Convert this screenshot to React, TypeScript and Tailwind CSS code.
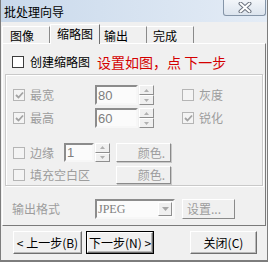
import React from "react";

const dim = "text-[#9d9d9d]";

function Check({ checked = false, disabled = false }: { checked?: boolean; disabled?: boolean }) {
  return (
    <div
      className={`w-[12px] h-[12px] shrink-0 border flex items-center justify-center ${
        disabled ? "border-[#b5b5b5] bg-[#f4f4f4]" : "border-[#3c3c3c] bg-white"
      }`}
    >
      {checked && (
        <svg width="9" height="9" viewBox="0 0 9 9">
          <path d="M1 4 L3.5 6.5 L8 1.5" fill="none" stroke={disabled ? "#a3a3a3" : "#222"} strokeWidth="1.8" />
        </svg>
      )}
    </div>
  );
}

function Spin({ h = 20 }: { h?: number }) {
  return (
    <div className={`flex flex-col w-[15px] ${h === 20 ? "h-[20px]" : "h-[19px]"}`}>
      {[0, 1].map((i) => (
        <div
          key={i}
          className="flex-1 bg-[#f0f0f0] border border-t-white border-l-white border-b-[#8f8f8f] border-r-[#8f8f8f] flex items-center justify-center"
        >
          <svg width="5" height="3" viewBox="0 0 5 3">
            <path d={i === 0 ? "M0 3 L2.5 0 L5 3 Z" : "M0 0 L2.5 3 L5 0 Z"} fill="#b0b0b0" />
          </svg>
        </div>
      ))}
    </div>
  );
}

function NumBox({ value, w }: { value: string; w: string }) {
  return (
    <div
      className={`${w} h-full bg-[#fbfbfb] border-2 border-t-[#8c8c8c] border-l-[#8c8c8c] border-b-[#f7f7f7] border-r-[#f7f7f7] flex items-center pl-[1px] font-['Liberation_Sans',sans-serif] text-[13px] text-[#7e7e7e]`}
    >
      {value}
    </div>
  );
}

function RaisedBtn({ children, w, h }: { children: React.ReactNode; w: string; h: string }) {
  return (
    <div
      className={`${w} ${h} bg-[#f0f0f0] border border-t-white border-l-white border-b-[#8a8a8a] border-r-[#8a8a8a] shadow-[1px_1px_0_#c8c8c8] flex items-center justify-end pr-[5px] ${dim}`}
    >
      {children}
    </div>
  );
}

function PushBtn({ children, def = false, w }: { children: React.ReactNode; def?: boolean; w: string }) {
  return (
    <div className={`${w} h-[23px] ${def ? "border border-black" : ""}`}>
      <div className="w-full h-full bg-[#f0f0f0] border border-t-white border-l-white border-b-[#6f6f6f] border-r-[#6f6f6f] shadow-[inset_-1px_-1px_0_#b8b8b8] flex items-center justify-center text-[12px] text-black whitespace-nowrap">
        {children}
      </div>
    </div>
  );
}

export default function App() {
  return (
    <div className="w-[268px] h-[262px] bg-[#f0f0f0] overflow-hidden font-['Noto_Sans_CJK_SC',sans-serif] text-[12px] leading-none text-black border-l border-r border-b-2 border-[#7d7d7d]">
      <div className="h-[22px] flex bg-gradient-to-r from-[#c9d9eb] to-[#e4ecf6]">
        <div className="pl-[3px] pt-[6px] text-[12px] text-black">批处理向导</div>
        <div className="ml-auto mr-[1px] w-[43px] h-[16px] border border-t-0 border-[#8595a8] rounded-b-[3px] bg-gradient-to-b from-[#f2f5f9] to-[#dce4ee] flex items-center justify-center">
          <svg width="14" height="11" viewBox="0 0 14 11">
            <path d="M2.5 1.5 L11.5 9.5 M11.5 1.5 L2.5 9.5" stroke="#6d7480" strokeWidth="4" strokeLinecap="round" />
            <path d="M2.5 1.5 L11.5 9.5 M11.5 1.5 L2.5 9.5" stroke="#ffffff" strokeWidth="2" strokeLinecap="round" />
          </svg>
        </div>
      </div>

      <div className="h-[21px] flex items-end pl-[1px]">
        <div className="w-[48px] h-[17px] border-t border-l border-white border-r border-r-[#8a8a8a] pl-[7px] pt-[3px]">图像</div>
        <div className="w-[50px] h-[20px] -mb-px relative bg-[#f0f0f0] border-t border-l border-white border-r border-r-[#6f6f6f] pl-[6px] pt-[3px]">缩略图</div>
        <div className="w-[47px] h-[17px] border-t border-white border-r border-r-[#8a8a8a] pl-[4px] pt-[3px]">输出</div>
        <div className="w-[47px] h-[17px] border-t border-white border-r border-r-[#8a8a8a] pl-[6px] pt-[3px]">完成</div>
      </div>

      <div className="ml-[1px] w-[264px] h-[183px] border border-t-white border-l-white border-r-[#7a7a7a] border-b-[#7a7a7a] flex flex-col">
        <div className="h-[14px] mt-[11px] ml-[9px] flex items-center">
          <Check />
          <span className="ml-[6px]">创建缩略图</span>
          <span className="ml-[7px] text-[14px] text-[#d40000]">设置如图，点 下一步</span>
        </div>

        <div className="mt-[5px] ml-[2px] w-[258px] h-[112px] border border-[#c9c9c9] shadow-[inset_1px_1px_0_#ffffff,1px_1px_0_#ffffff] flex flex-col">
          <div className="mt-[10px] h-[20px] flex items-center">
            <div className="ml-[7px]"><Check checked disabled /></div>
            <span className={`ml-[5px] w-[60px] ${dim}`}>最宽</span>
            <div className="ml-[5px] h-full flex gap-[1px]">
              <NumBox value="80" w="w-[43px]" />
              <Spin />
            </div>
            <div className="ml-[28px]"><Check disabled /></div>
            <span className={`ml-[5px] ${dim}`}>灰度</span>
          </div>
          <div className="mt-[3px] h-[20px] flex items-center">
            <div className="ml-[7px]"><Check checked disabled /></div>
            <span className={`ml-[5px] w-[60px] ${dim}`}>最高</span>
            <div className="ml-[5px] h-full flex gap-[1px]">
              <NumBox value="60" w="w-[43px]" />
              <Spin />
            </div>
            <div className="ml-[28px]"><Check checked disabled /></div>
            <span className={`ml-[5px] ${dim}`}>锐化</span>
          </div>

          <div className="mt-[15px] h-[19px] flex items-center">
            <div className="ml-[7px]"><Check disabled /></div>
            <span className={`ml-[5px] w-[29px] ${dim}`}>边缘</span>
            <div className="ml-[5px] h-full flex gap-[1px]">
              <NumBox value="1" w="w-[30px]" />
              <Spin h={19} />
            </div>
            <div className="ml-[6px]">
              <RaisedBtn w="w-[55px]" h="h-[19px]">颜色.</RaisedBtn>
            </div>
          </div>
          <div className="mt-[4px] h-[18px] flex items-center">
            <div className="ml-[7px]"><Check disabled /></div>
            <span className={`ml-[5px] w-[86px] ${dim}`}>填充空白区</span>
            <div>
              <RaisedBtn w="w-[55px]" h="h-[18px]">颜色.</RaisedBtn>
            </div>
          </div>
        </div>

        <div className="mt-[13px] h-[20px] flex items-center">
          <span className={`ml-[9px] w-[83px] ${dim}`}>输出格式</span>
          <div className="w-[80px] h-full bg-[#fbfbfb] border-2 border-t-[#8c8c8c] border-l-[#8c8c8c] border-b-[#f7f7f7] border-r-[#f7f7f7] flex items-center">
            <span className="pl-[1px] font-['Liberation_Serif',serif] text-[12px] text-[#7e7e7e]">JPEG</span>
            <div className="ml-auto mr-[1px] w-[14px] h-[14px] bg-[#f0f0f0] border border-t-white border-l-white border-b-[#8f8f8f] border-r-[#8f8f8f] flex items-center justify-center">
              <svg width="7" height="4" viewBox="0 0 7 4">
                <path d="M0 0 L3.5 4 L7 0 Z" fill="#a8a8a8" />
              </svg>
            </div>
          </div>
          <div className="ml-[7px]">
            <div className={`w-[53px] h-[20px] bg-[#f0f0f0] border border-t-white border-l-white border-b-[#8a8a8a] border-r-[#8a8a8a] flex items-center pl-[4px] ${dim}`}>
              设置...
            </div>
          </div>
        </div>
      </div>

      <div className="mt-[5px] flex items-center">
        <div className="ml-[12px]">
          <PushBtn w="w-[69px]">&lt; 上一步(B)</PushBtn>
        </div>
        <div className="ml-[4px]">
          <PushBtn def w="w-[68px]">下一步(N) &gt;</PushBtn>
        </div>
        <div className="ml-[36px]">
          <PushBtn w="w-[67px]">关闭(C)</PushBtn>
        </div>
      </div>
    </div>
  );
}
